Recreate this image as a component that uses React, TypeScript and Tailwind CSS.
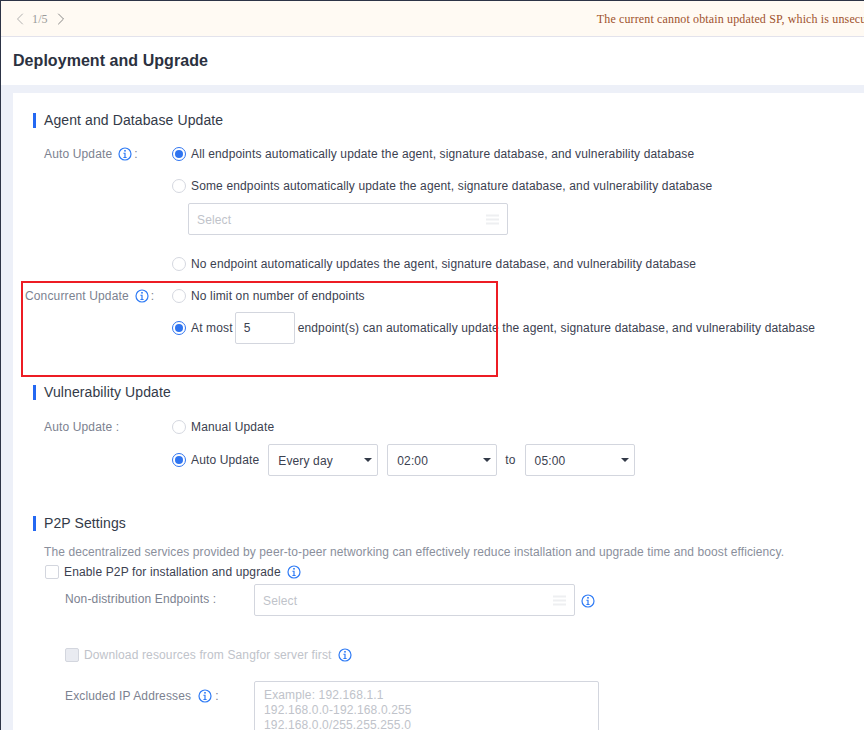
import React from "react";
import { ChevronLeft, ChevronRight } from "lucide-react";

const InfoIcon = ({ className = "" }: { className?: string }) => (
  <svg width="14" height="14" viewBox="0 0 14 14" fill="none" className={`shrink-0 ${className}`}>
    <circle cx="7" cy="7" r="6" stroke="#2f7bf5" strokeWidth="1.2" />
    <rect x="6.2" y="3" width="1.6" height="1.6" fill="#2f7bf5" />
    <path d="M5.4 5.7H7.6V9.9H8.6V10.9H5.4V9.9H6.4V6.7H5.4Z" fill="#2f7bf5" />
  </svg>
);

const ListIcon = () => (
  <svg width="13" height="11" viewBox="0 0 13 11" className="shrink-0">
    <path d="M0 1.5H13M0 5.5H13M0 9.5H13" stroke="#eeeff1" strokeWidth="2" />
  </svg>
);

const Radio = ({ checked = false }: { checked?: boolean }) =>
  checked ? (
    <span className="flex h-[14px] w-[14px] shrink-0 items-center justify-center rounded-full border border-[#2f74f0] bg-white">
      <span className="h-[8px] w-[8px] rounded-full bg-[#2f74f0]" />
    </span>
  ) : (
    <span className="h-[14px] w-[14px] shrink-0 rounded-full border border-[#d5d8e0] bg-white" />
  );

const SectionTitle = ({ children, className = "" }: { children: React.ReactNode; className?: string }) => (
  <div className={`flex h-[15px] items-center ${className}`}>
    <span className="h-[15px] w-[3px] bg-[#2468f2]" />
    <span className="ml-[8px] text-[14px] tracking-[0.1px] text-[#333a48]">{children}</span>
  </div>
);

const RadioRow = ({ checked, label, children }: { checked?: boolean; label?: string; children?: React.ReactNode }) => (
  <div className="flex h-8 items-center whitespace-nowrap">
    <Radio checked={checked} />
    <span className="ml-[5px] flex items-center text-[#3b4150]">{label}{children}</span>
  </div>
);

const DropBox = ({ value, className = "" }: { value: string; className?: string }) => (
  <div className={`flex h-8 w-[110px] items-center justify-between rounded-[2px] border border-[#d3d6de] pl-[9px] pr-[5px] text-[#3b4150] ${className}`}>
    <span className="pt-[1px]">{value}</span>
    <span className="h-0 w-0 border-x-[4px] border-t-[4px] border-x-transparent border-t-[#333a48]" />
  </div>
);

const SelectBox = ({ className = "" }: { className?: string }) => (
  <div className={`flex h-8 items-center justify-between rounded-[2px] border border-[#d3d6de] pl-[8px] pr-[8px] text-[#c0c3ca] ${className}`}>
    <span className="pt-[1px]">Select</span>
    <ListIcon />
  </div>
);

export default function App() {
  return (
    <div className="flex h-[730px] w-[864px] flex-col overflow-hidden border-l border-t border-[#2d3446] bg-[#edf0f8] font-['Liberation_Sans',Arial,sans-serif] text-[12px] tracking-[0.14px]">
      {/* notice bar */}
      <div className="flex h-[35px] shrink-0 items-center whitespace-nowrap bg-[#fffaf3] font-['Liberation_Serif',serif]">
        <ChevronLeft size={20} strokeWidth={1.1} className="ml-[9px] shrink-0 text-[#a8a8a8]" />
        <span className="ml-[2px] text-[#9a9a9a]">1/5</span>
        <ChevronRight size={20} strokeWidth={1.1} className="ml-[3px] shrink-0 text-[#7d7d7d]" />
        <span className="ml-[526px] text-[#a0522d]">The current cannot obtain updated SP, which is unsecure</span>
      </div>
      <div className="h-[1px] shrink-0 bg-[#e3e3ec]" />

      {/* page title */}
      <div className="flex h-[48px] shrink-0 items-center bg-white pl-[12px]">
        <h1 className="text-[16px] font-bold tracking-[0.05px] text-[#2b3140]">Deployment and Upgrade</h1>
      </div>

      {/* panel */}
      <div className="mt-2 ml-3 flex-1 bg-white pl-5 pt-[20px]">
        <SectionTitle>Agent and Database Update</SectionTitle>

        <div className="mt-[10px] flex">
          <div className="flex h-8 w-[139px] shrink-0 items-center pl-[11px] text-[#7c8290]">
            Auto Update
            <InfoIcon className="ml-[6px] mr-[2px]" />:
          </div>
          <div>
            <RadioRow checked label="All endpoints automatically update the agent, signature database, and vulnerability database" />
            <RadioRow label="Some endpoints automatically update the agent, signature database, and vulnerability database" />
            <SelectBox className="ml-[16px] mt-[1px] w-[320px]" />
            <div className="mt-[13px]">
              <RadioRow label="No endpoint automatically updates the agent, signature database, and vulnerability database" />
            </div>
          </div>
        </div>

        <div className="flex">
          <div className="-ml-[8px] flex h-8 w-[147px] shrink-0 items-center text-[#7c8290]">
            Concurrent Update
            <InfoIcon className="ml-[6px] mr-[2px]" />:
          </div>
          <div>
            <RadioRow label="No limit on number of endpoints" />
            <RadioRow checked label="At most">
              <span className="ml-[2px] flex h-8 w-[60px] items-center rounded-[2px] border border-[#d3d6de] pl-[8px]">5</span>
              <span className="ml-[3px]">endpoint(s) can automatically update the agent, signature database, and vulnerability database</span>
            </RadioRow>
          </div>
        </div>

        <SectionTitle className="mt-[41px]">Vulnerability Update</SectionTitle>

        <div className="mt-[11px] flex">
          <div className="flex h-8 w-[139px] shrink-0 items-center pl-[11px] text-[#7c8290]">Auto Update :</div>
          <div>
            <RadioRow label="Manual Update" />
            <div className="mt-[1px]">
              <RadioRow checked label="Auto Update">
                <DropBox value="Every day" className="ml-[9px]" />
                <DropBox value="02:00" className="ml-[9px]" />
                <span className="ml-[8px]">to</span>
                <DropBox value="05:00" className="ml-[9px]" />
              </RadioRow>
            </div>
          </div>
        </div>

        <SectionTitle className="mt-[40px]">P2P Settings</SectionTitle>

        <div className="pl-[11px]">
          <p className="mt-[14px] h-[14px] whitespace-nowrap text-[12px] leading-[14px] tracking-[0.1px] text-[#8a8f9c]">
            The decentralized services provided by peer-to-peer networking can effectively reduce installation and upgrade time and boost efficiency.
          </p>
          <div className="mt-[6px] flex h-[14px] items-center whitespace-nowrap text-[#3b4150]">
            <span className="ml-[1px] h-[14px] w-[14px] rounded-[2px] border border-[#d3d6de]" />
            <span className="ml-[5px]">Enable P2P for installation and upgrade</span>
            <InfoIcon className="ml-[6px]" />
          </div>

          <div className="mt-[5px] flex items-start pl-[21px]">
            <span className="w-[189px] shrink-0 pt-[6px] text-[#7c8290]">Non-distribution Endpoints :</span>
            <SelectBox className="w-[321px]" />
            <InfoIcon className="ml-[6px] mt-[10px]" />
          </div>

          <div className="mt-[32px] flex h-[14px] items-center whitespace-nowrap pl-[21px] text-[#c0c3ca]">
            <span className="h-[14px] w-[14px] rounded-[2px] border border-[#d3d6de] bg-[#e9ebf1]" />
            <span className="ml-[5px]">Download resources from Sangfor server first</span>
            <InfoIcon className="ml-[6px]" />
          </div>

          <div className="mt-[19px] flex items-start pl-[21px]">
            <div className="flex w-[189px] shrink-0 items-center pt-[6px] text-[#7c8290]">
              Excluded IP Addresses
              <InfoIcon className="ml-[7px] mr-[3px]" />:
            </div>
            <div className="h-[80px] w-[345px] rounded-[2px] border border-[#d3d6de] pl-[9px] pt-[6px] leading-[15px] text-[#c0c3ca]">
              <div>Example: 192.168.1.1</div>
              <div>192.168.0.0-192.168.0.255</div>
              <div>192.168.0.0/255.255.255.0</div>
            </div>
          </div>
        </div>
      </div>

      {/* red annotation drawn over the screenshot */}
      <div className="absolute left-[21px] top-[281px] h-[96px] w-[477px] border-2 border-[#ed1c24]" />
    </div>
  );
}
